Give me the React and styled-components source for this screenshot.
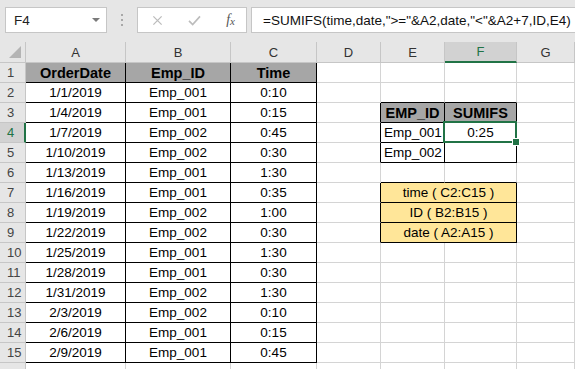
import React from "react";
import styled, { createGlobalStyle } from "styled-components";

const GlobalStyle = createGlobalStyle`
  html, body {
    margin: 0;
    padding: 0;
    background: #ffffff;
    overflow: hidden;
  }
  body {
    font-family: "Liberation Sans", Arial, sans-serif;
  }
`;

const GRID = "#d4d4d4";
const HEAD_LINE = "#c6c6c6";
const GREEN = "#217346";

const COLS = ["A", "B", "C", "D", "E", "F", "G"];

const orders = [
  ["1/1/2019", "Emp_001", "0:10"],
  ["1/4/2019", "Emp_001", "0:15"],
  ["1/7/2019", "Emp_002", "0:45"],
  ["1/10/2019", "Emp_002", "0:30"],
  ["1/13/2019", "Emp_001", "1:30"],
  ["1/16/2019", "Emp_001", "0:35"],
  ["1/19/2019", "Emp_002", "1:00"],
  ["1/22/2019", "Emp_002", "0:30"],
  ["1/25/2019", "Emp_001", "1:30"],
  ["1/28/2019", "Emp_001", "0:30"],
  ["1/31/2019", "Emp_002", "1:30"],
  ["2/3/2019", "Emp_002", "0:10"],
  ["2/6/2019", "Emp_001", "0:15"],
  ["2/9/2019", "Emp_001", "0:45"]
];

// cell contents keyed by address
const cells = {
  A1: { v: "OrderDate", bold: true, bg: "#a6a6a6", box: true },
  B1: { v: "Emp_ID", bold: true, bg: "#a6a6a6", box: true },
  C1: { v: "Time", bold: true, bg: "#a6a6a6", box: true },
  E3: { v: "EMP_ID", bold: true, bg: "#a6a6a6", box: true },
  F3: { v: "SUMIFS", bold: true, bg: "#a6a6a6", box: true },
  E4: { v: "Emp_001", align: "left", box: true },
  F4: { v: "0:25", box: true, active: true },
  E5: { v: "Emp_002", align: "left", box: true },
  F5: { v: "", box: true },
  E7: { v: "time ( C2:C15 )", bg: "#ffe699", box: true, span: 2 },
  F7: { box: true, skip: true },
  E8: { v: "ID ( B2:B15 )", bg: "#ffe699", box: true, span: 2 },
  F8: { box: true, skip: true },
  E9: { v: "date ( A2:A15 )", bg: "#ffe699", box: true, span: 2 },
  F9: { box: true, skip: true }
};
orders.forEach((o, i) => {
  const r = i + 2;
  cells[`A${r}`] = { v: o[0], box: true };
  cells[`B${r}`] = { v: o[1], box: true };
  cells[`C${r}`] = { v: o[2], box: true };
});

const boxed = (ci, r) => {
  if (ci < 0 || ci >= COLS.length) return false;
  const c = cells[`${COLS[ci]}${r}`];
  return !!(c && c.box);
};

// row 16 is only peeking in at the bottom edge, its number is hidden
const ROWS = Array.from({ length: 16 }, (_, i) => i + 1);

export default function App() {
  return (
    <>
      <GlobalStyle />
      <Window>
        <FormulaBar>
          <NameBox>
            <span>F4</span>
            <DropArrow />
          </NameBox>
          <Grip>
            <i />
            <i />
            <i />
          </Grip>
          <FxButtons>
            <FxIcon viewBox="0 0 12 12" width="11" height="11">
              <path d="M1.5 1.5 L10.5 10.5 M10.5 1.5 L1.5 10.5" stroke="#bcbcbc" strokeWidth="1.4" fill="none" />
            </FxIcon>
            <FxIcon viewBox="0 0 14 12" width="13" height="11">
              <path d="M1 6.5 L5 10.5 L13 1.5" stroke="#bcbcbc" strokeWidth="1.8" fill="none" />
            </FxIcon>
            <FxLabel>
              f<sub>x</sub>
            </FxLabel>
          </FxButtons>
          <FormulaInput>
            =SUMIFS(time,date,"&gt;="&amp;A2,date,"&lt;"&amp;A2+7,ID,E4)
          </FormulaInput>
        </FormulaBar>

        <Sheet>
          <Corner>
            <CornerTriangle />
          </Corner>
          {COLS.map((c) => (
            <ColHead key={c} $active={c === "F"}>
              {c}
            </ColHead>
          ))}

          {ROWS.map((r) => (
            <React.Fragment key={r}>
              <RowHead $active={r === 4}>{r < 16 ? r : ""}</RowHead>
              {COLS.map((col, ci) => {
                const cell = cells[`${col}${r}`];
                if (cell && cell.skip) return null;
                const span = (cell && cell.span) || 1;
                const lastCi = ci + span - 1;
                const rightDark = boxed(ci, r) || boxed(lastCi + 1, r);
                const bottomDark = boxed(ci, r) || boxed(ci, r + 1);
                return (
                  <Cell
                    key={col}
                    $span={span}
                    $bg={cell && cell.bg}
                    $bold={cell && cell.bold}
                    $align={cell && cell.align}
                    $right={rightDark ? "#000" : GRID}
                    $bottom={bottomDark ? "#000" : GRID}
                  >
                    {cell && cell.v}
                    {cell && cell.active && (
                      <Selection>
                        <Handle />
                      </Selection>
                    )}
                  </Cell>
                );
              })}
            </React.Fragment>
          ))}
        </Sheet>
      </Window>
    </>
  );
}

const Window = styled.div`
  width: 575px;
  height: 369px;
  overflow: hidden;
  background: #ffffff;
`;

const FormulaBar = styled.div`
  height: 42px;
  box-sizing: border-box;
  background: #e6e6e6;
  display: flex;
  align-items: flex-start;
  padding: 7px 0 0 5px;
  font-family: "Liberation Sans", Arial, sans-serif;
`;

const NameBox = styled.div`
  flex: 0 0 102px;
  height: 26px;
  box-sizing: border-box;
  background: #ffffff;
  border: 1px solid #c6c6c6;
  display: flex;
  align-items: center;
  justify-content: space-between;
  padding: 0 6px 0 8px;
  font-size: 13.5px;
  color: #222;
`;

const DropArrow = styled.span`
  width: 0;
  height: 0;
  border-left: 4px solid transparent;
  border-right: 4px solid transparent;
  border-top: 4px solid #7a7a7a;
`;

const Grip = styled.div`
  flex: 0 0 30px;
  height: 26px;
  display: flex;
  flex-direction: column;
  align-items: center;
  justify-content: center;
  gap: 3px;
  i {
    width: 2px;
    height: 2px;
    background: #a8a8a8;
  }
`;

const FxButtons = styled.div`
  flex: 0 0 110px;
  height: 26px;
  box-sizing: border-box;
  background: #ffffff;
  border: 1px solid #c6c6c6;
  display: flex;
  align-items: center;
  justify-content: space-between;
  padding: 0 11px 0 14px;
`;

const FxIcon = styled.svg`
  display: block;
`;

const FxLabel = styled.span`
  font-family: "Liberation Serif", "Times New Roman", serif;
  font-style: italic;
  font-size: 14px;
  color: #555;
  sub {
    font-size: 11px;
    vertical-align: -1px;
  }
`;

const FormulaInput = styled.div`
  flex: 1;
  min-width: 0;
  overflow: hidden;
  margin-left: 4px;
  height: 26px;
  box-sizing: border-box;
  background: #ffffff;
  border: 1px solid #c6c6c6;
  border-right: none;
  padding: 0 0 0 11px;
  display: flex;
  align-items: center;
  white-space: nowrap;
  font-size: 13.5px;
  color: #111;
`;

const Sheet = styled.div`
  display: grid;
  grid-template-columns: 26px 100px 105px 86px 64px 64px 72px 1fr;
  grid-template-rows: 21px;
  grid-auto-rows: 20px;
  font-family: "Liberation Sans", Arial, sans-serif;
`;

const Corner = styled.div`
  background: #e6e6e6;
  border-right: 1px solid ${HEAD_LINE};
  border-bottom: 1px solid ${HEAD_LINE};
  display: flex;
  align-items: flex-end;
  justify-content: flex-end;
  padding: 0 4px 4px 0;
`;

const CornerTriangle = styled.div`
  width: 0;
  height: 0;
  border-left: 12px solid transparent;
  border-bottom: 12px solid #b4b4b4;
`;

const ColHead = styled.div`
  background: ${(p) => (p.$active ? "#d2d2d2" : "#e6e6e6")};
  border-right: 1px solid ${HEAD_LINE};
  border-bottom: ${(p) => (p.$active ? `2px solid ${GREEN}` : `1px solid ${HEAD_LINE}`)};
  display: flex;
  align-items: center;
  justify-content: center;
  font-size: 13px;
  color: ${(p) => (p.$active ? GREEN : "#333")};
`;

const RowHead = styled.div`
  background: ${(p) => (p.$active ? "#d2d2d2" : "#e6e6e6")};
  border-right: ${(p) => (p.$active ? `2px solid ${GREEN}` : `1px solid ${HEAD_LINE}`)};
  border-bottom: 1px solid ${HEAD_LINE};
  display: flex;
  align-items: center;
  padding-left: 7px;
  font-size: 13px;
  color: ${(p) => (p.$active ? GREEN : "#444")};
`;

const Cell = styled.div`
  position: relative;
  grid-column: span ${(p) => p.$span};
  background: ${(p) => p.$bg || "#ffffff"};
  border-right: 1px solid ${(p) => p.$right};
  border-bottom: 1px solid ${(p) => p.$bottom};
  display: flex;
  align-items: center;
  justify-content: ${(p) => (p.$align === "left" ? "flex-start" : "center")};
  padding: 0 ${(p) => (p.$align === "left" ? "3px" : "0")};
  font-size: ${(p) => (p.$bold ? "14.5px" : "13.5px")};
  font-weight: ${(p) => (p.$bold ? 700 : 400)};
  color: #000;
  white-space: nowrap;
`;

const Selection = styled.div`
  position: absolute;
  z-index: 2;
  left: -2px;
  top: -2px;
  right: -1px;
  bottom: -1px;
  border: 2px solid ${GREEN};
  pointer-events: none;
`;

const Handle = styled.div`
  position: absolute;
  right: -5px;
  bottom: -5px;
  width: 6px;
  height: 6px;
  background: ${GREEN};
  border: 1px solid #ffffff;
`;
